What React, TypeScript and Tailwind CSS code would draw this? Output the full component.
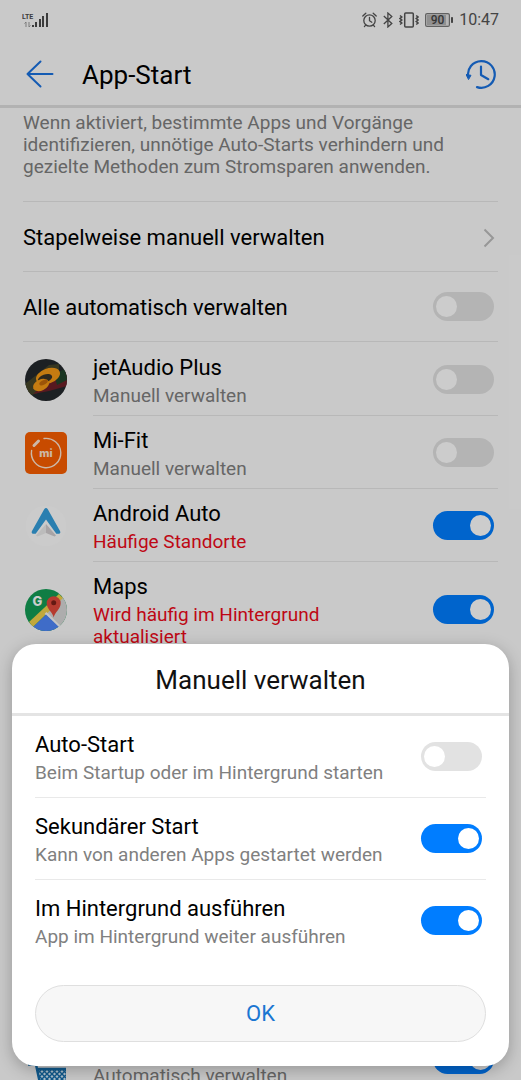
import { useState, type ReactNode } from "react";

type SwitchRowProps = {
  id: string;
  name: string;
  note: string;
  defaultOn?: boolean;
};

type AppRowProps = SwitchRowProps & {
  icon: ReactNode;
  warning?: boolean;
};

function Toggle({ id, defaultOn = false }: { id: string; defaultOn?: boolean }) {
  const [on, setOn] = useState(defaultOn);

  return (
    <input
      id={id}
      type="checkbox"
      role="switch"
      checked={on}
      onChange={(event) => setOn(event.target.checked)}
      className="mr-1 flex h-[29px] w-[61px] shrink-0 cursor-pointer appearance-none items-center rounded-full bg-[#e2e2e2] px-[3px] before:size-[21px] before:rounded-full before:bg-white checked:justify-end checked:bg-[#007dff]"
    />
  );
}

function SignalIcon() {
  return (
    <svg width="26" height="16" viewBox="0 0 26 16" className="text-[#4c4c4c]" fill="currentColor" aria-hidden="true">
      <text x="0" y="7" fontFamily="Roboto" fontSize="7" fontWeight="700">
        LTE
      </text>
      <path d="M4 15v-5M2.5 11.5 4 10M7 10v5M8.5 13.5 7 15" fill="none" stroke="#999" />
      <rect x="10" y="13" width="2" height="2" />
      <rect x="13" y="10" width="2" height="5" />
      <rect x="17" y="7" width="2" height="8" />
      <rect x="20" y="4" width="2" height="11" />
      <rect x="24" y="1" width="2" height="14" />
    </svg>
  );
}

function AlarmIcon() {
  return (
    <svg width="15" height="16" viewBox="0 0 15 16" fill="none" stroke="currentColor" strokeWidth="1.3" strokeLinecap="round" aria-hidden="true">
      <circle cx="7.5" cy="8.5" r="5.7" />
      <path d="M7.5 5.3v3.4l2.3 1.5M.8 4 3.8 1.2M14.2 4l-3-2.8M3.6 13.2l-1.2 1.4M11.4 13.2l1.2 1.4" />
    </svg>
  );
}

function BluetoothIcon() {
  return (
    <svg width="10" height="16" viewBox="0 0 10 16" fill="none" stroke="currentColor" strokeWidth="1.3" aria-hidden="true">
      <path d="m.8 4 8 7.6L4.9 15V1l3.9 3.4L.8 12" />
    </svg>
  );
}

function VibrateIcon() {
  return (
    <svg width="20" height="16" viewBox="0 0 20 16" fill="none" stroke="currentColor" strokeWidth="1.5" aria-hidden="true">
      <rect x="5.7" y="1" width="8.6" height="14" rx="1" />
      <path d="m1 3.500 1.800 1.500L1 6.500 2.800 8 1 9.500 2.800 11 1 12.500M17.200 3.500 19 5l-1.800 1.500L19 8l-1.800 1.500L19 11l-1.800 1.500" />
    </svg>
  );
}

function BatteryIcon() {
  return (
    <svg width="28" height="14" viewBox="0 0 28 14" aria-hidden="true">
      <rect x=".6" y=".6" width="23.8" height="12.8" rx="1.5" fill="#e4e4e4" stroke="#7a7a7a" strokeWidth="1.2" />
      <rect x="2" y="2" width="19" height="10" fill="#b4b4b4" />
      <text x="12.5" y="11" textAnchor="middle" fontFamily="Roboto" fontSize="12" fontWeight="500" fill="#444">
        90
      </text>
      <rect x="26" y="4" width="2" height="6" rx=".8" fill="#555" />
    </svg>
  );
}

function BackIcon() {
  return (
    <svg width="28" height="28" viewBox="0 0 28 28" fill="none" stroke="#1a72e0" strokeWidth="2" strokeLinecap="round" strokeLinejoin="round" aria-hidden="true">
      <path d="M26.5 14h-25M14.5 1.5 1.5 14l13 12.5" />
    </svg>
  );
}

function HistoryIcon() {
  return (
    <svg width="30" height="30" viewBox="0 0 30 30" fill="none" stroke="#1a72e0" strokeWidth="2.2" strokeLinecap="round" aria-hidden="true">
      <path d="M2.2 18A13.4 13.4 0 1 1 11 28.1" />
      <path d="M15 7.5V16l7.3 4.2" strokeLinejoin="round" />
      <path d="m.4 15.5 4.6.8-2.3 4z" fill="#1a72e0" strokeWidth="1" />
    </svg>
  );
}

function JetAudioIcon() {
  return (
    <svg width="42" height="42" viewBox="0 0 42 42" aria-hidden="true">
      <defs>
        <clipPath id="jet-disc">
          <circle cx="21" cy="21" r="21" />
        </clipPath>
      </defs>
      <g clipPath="url(#jet-disc)">
        <path d="M0 0h42v42H0z" fill="#24282c" />
        <path d="M0 25 24 6l10-1v9L13 34 0 38z" fill="#45452a" />
        <path d="M8 35 35 14l7-1v14L24 32z" fill="#6d2028" />
        <path d="m29 15 13-6v12l-10 5z" fill="#20452b" />
      </g>
      <ellipse cx="23" cy="17" rx="12.500" ry="7.500" transform="rotate(-20 23 17)" fill="#f59a16" />
      <ellipse cx="20" cy="19.500" rx="7.500" ry="4" transform="rotate(-20 20 19.500)" fill="#3a3426" />
      <ellipse cx="16" cy="26" rx="8.500" ry="5.500" transform="rotate(-25 16 26)" fill="#f59a16" />
      <ellipse cx="18.500" cy="23.500" rx="4.500" ry="2.200" transform="rotate(-25 18.500 23.500)" fill="#c26a0c" />
    </svg>
  );
}

function MiFitIcon() {
  return (
    <svg width="42" height="42" viewBox="0 0 42 42" aria-hidden="true">
      <rect width="42" height="42" rx="5" fill="#fa5e00" />
      <path d="M19 6.5A14.700 14.700 0 1 1 6.600 18.500" fill="none" stroke="#ffe6d2" strokeWidth="1.4" strokeLinecap="round" />
      <path d="m9 13.500 4.500-4.500" stroke="#ffe6d2" strokeWidth="3" strokeLinecap="round" />
      <text x="21" y="25" textAnchor="middle" fontFamily="Inter" fontSize="11" fontWeight="800" fill="#ffe6d2">
        mi
      </text>
    </svg>
  );
}

function AndroidAutoIcon() {
  return (
    <svg width="42" height="42" viewBox="0 0 42 42" aria-hidden="true">
      <circle cx="21" cy="21" r="20.5" fill="#fff" opacity=".5" />
      <path d="M21 19 11 30.500l1.500 1L21 28z" fill="#ececec" />
      <path d="m21 19 10 11.500-1.500 1L21 28z" fill="#d2ced0" />
      <path
        d="M19.200 4.200q1.800-2.400 3.600 0L35 26c.8 1.500.2 2.800-1.400 2.800h-2.300L21 14.500 10.700 28.800H8.400C6.800 28.800 6.200 27.500 7 26z"
        fill="#359fdc"
      />
    </svg>
  );
}

function MapsIcon() {
  return (
    <svg width="42" height="42" viewBox="0 0 42 42" aria-hidden="true">
      <defs>
        <clipPath id="maps-disc">
          <circle cx="21" cy="21" r="21" />
        </clipPath>
      </defs>
      <g clipPath="url(#maps-disc)">
        <path d="M0 0h42v42H0z" fill="#139d55" />
        <path d="M42 4v38h-4L20 24z" fill="#d9d9d9" />
        <path d="m4 33 30-28 4 4L8 38z" fill="#f2d24b" />
        <path d="m20.5 24 19 18.500" stroke="#f7f7f7" strokeWidth="2.5" />
        <path d="M21 25.500 38 42H4z" fill="#4f87fa" />
      </g>
      <text x="12.500" y="17" textAnchor="middle" fontFamily="Inter" fontSize="13" fontWeight="800" fill="#fff">
        G
      </text>
      <path d="M28.700 28.500c-.8-5-7-8.500-7-14.300a7 7 0 0 1 14 0c0 5.800-6.200 9.300-7 14.300Z" fill="#e34a3c" />
      <circle cx="28.700" cy="13.700" r="2.500" fill="#7d2018" />
    </svg>
  );
}

function CartIcon() {
  return (
    <svg width="42" height="42" viewBox="0 0 42 42" aria-hidden="true">
      <defs>
        <pattern id="cart-mesh" x="12" y="30" width="5" height="5" patternUnits="userSpaceOnUse">
          <path d="m0 0 5 5M5 0 0 5" stroke="#1570b0" strokeWidth="1.4" />
        </pattern>
      </defs>
      <path d="M12 29h29v13H14z" fill="#d8efff" />
      <path d="M12 29h29v13H14z" fill="url(#cart-mesh)" />
      <path d="M3 25.500h8L14.500 42M12 30h29" fill="none" stroke="#1570b0" strokeWidth="2.5" />
    </svg>
  );
}

const apps: AppRowProps[] = [
  { id: "jetaudio", name: "jetAudio Plus", note: "Manuell verwalten", icon: <JetAudioIcon /> },
  { id: "mifit", name: "Mi-Fit", note: "Manuell verwalten", icon: <MiFitIcon /> },
  {
    id: "android-auto",
    name: "Android Auto",
    note: "Häufige Standorte",
    icon: <AndroidAutoIcon />,
    defaultOn: true,
    warning: true,
  },
  {
    id: "maps",
    name: "Maps",
    note: "Wird häufig im Hintergrund aktualisiert",
    icon: <MapsIcon />,
    defaultOn: true,
    warning: true,
  },
];

const options: SwitchRowProps[] = [
  { id: "auto-start", name: "Auto-Start", note: "Beim Startup oder im Hintergrund starten" },
  { id: "secondary-start", name: "Sekundärer Start", note: "Kann von anderen Apps gestartet werden", defaultOn: true },
  { id: "background", name: "Im Hintergrund ausführen", note: "App im Hintergrund weiter ausführen", defaultOn: true },
];

function AppRow({ id, name, note, icon, defaultOn, warning }: AppRowProps) {
  return (
    <li className="flex items-center gap-[26px] pl-0.5">
      <span className="shrink-0">{icon}</span>
      <div className="flex flex-1 items-center gap-[26px] border-b border-[#e6e6e6]">
        <label htmlFor={id} className="flex-1 pt-3 pb-2">
          <span className="block h-[26px] text-[22px] leading-[26px] text-black">{name}</span>
          <span className={`mt-1 block text-[19px] leading-[22px] ${warning ? "text-[#ee0a1a]" : "text-[#808080]"}`}>
            {note}
          </span>
        </label>
        <Toggle id={id} defaultOn={defaultOn} />
      </div>
    </li>
  );
}

function StatusBar() {
  return (
    <div className="flex h-10 items-center justify-between px-[22px] text-[#555]">
      <SignalIcon />
      <div className="flex items-center gap-1.5">
        <AlarmIcon />
        <BluetoothIcon />
        <VibrateIcon />
        <BatteryIcon />
        <time className="text-base">10:47</time>
      </div>
    </div>
  );
}

function ManageSheet() {
  return (
    <section
      role="dialog"
      aria-labelledby="sheet-title"
      className="absolute inset-x-3 bottom-3.5 rounded-3xl bg-white pb-6 shadow-[0_4px_16px_rgba(0,0,0,0.25)]"
    >
      <h2
        id="sheet-title"
        className="border-b-3 border-[#e4e4e4] pt-5 pb-[17px] text-center text-[26px] leading-8 text-[#111]"
      >
        Manuell verwalten
      </h2>
      <div className="px-[23px]">
        <ul className="divide-y divide-[#e9e9e9]">
          {options.map((option) => (
            <li key={option.id} className="flex items-center gap-6">
              <label htmlFor={option.id} className="flex-1 pt-4 pb-[13px]">
                <span className="block text-[22px] leading-[26px] text-black">{option.name}</span>
                <span className="mt-1 block text-[19px] leading-[22px] text-[#808080]">{option.note}</span>
              </label>
              <Toggle id={option.id} defaultOn={option.defaultOn} />
            </li>
          ))}
        </ul>
        <button
          type="button"
          className="mt-6 h-[57px] w-full rounded-full border border-[#dfdfdf] bg-[#f7f7f7] text-[22px] text-[#1a76d2]"
        >
          OK
        </button>
      </div>
    </section>
  );
}

export default function App() {
  return (
    <div className="relative h-screen overflow-hidden bg-[#fcfcfc] font-[Roboto,sans-serif]">
      <StatusBar />
      <header className="flex h-[68px] items-center border-b-3 border-[#dfdfdf] pt-0.5 pr-[25px] pl-[26px]">
        <button type="button" aria-label="Zurück">
          <BackIcon />
        </button>
        <h1 className="ml-7 flex-1 pt-0.5 text-[26px] leading-8 text-black">App-Start</h1>
        <button type="button" aria-label="Verlauf">
          <HistoryIcon />
        </button>
      </header>

      <main className="px-[23px]">
        <p className="border-b border-[#e6e6e6] pt-1 pr-6 pb-[23px] text-[19px] leading-[22px] text-[#808080]">
          Wenn aktiviert, bestimmte Apps und Vorgänge identifizieren, unnötige Auto-Starts verhindern und gezielte
          Methoden zum Stromsparen anwenden.
        </p>
        <a href="#batch" className="flex h-[70px] items-center justify-between border-b border-[#e6e6e6] pt-0.5 text-[22px] text-black">
          Stapelweise manuell verwalten
          <svg width="12" height="20" viewBox="0 0 12 20" fill="none" stroke="#bdbdbd" strokeWidth="2" className="mr-[3px]" aria-hidden="true">
            <path d="m1.500 1.500 8.500 8.500-8.500 8.500" />
          </svg>
        </a>
        <div className="flex h-[70px] items-center justify-between border-b border-[#e6e6e6]">
          <label htmlFor="all-auto" className="pt-0.5 text-[22px] text-black">
            Alle automatisch verwalten
          </label>
          <Toggle id="all-auto" />
        </div>
        <ul className="pt-px">
          {apps.map((app) => (
            <AppRow key={app.id} {...app} />
          ))}
          {/* the five rows under the sheet */}
          <li className="h-[366px]" aria-hidden="true" />
          <AppRow id="shop" name="" note="Automatisch verwalten" icon={<CartIcon />} defaultOn />
        </ul>
      </main>

      <div className="absolute inset-0 bg-black/20" />
      <ManageSheet />
    </div>
  );
}
